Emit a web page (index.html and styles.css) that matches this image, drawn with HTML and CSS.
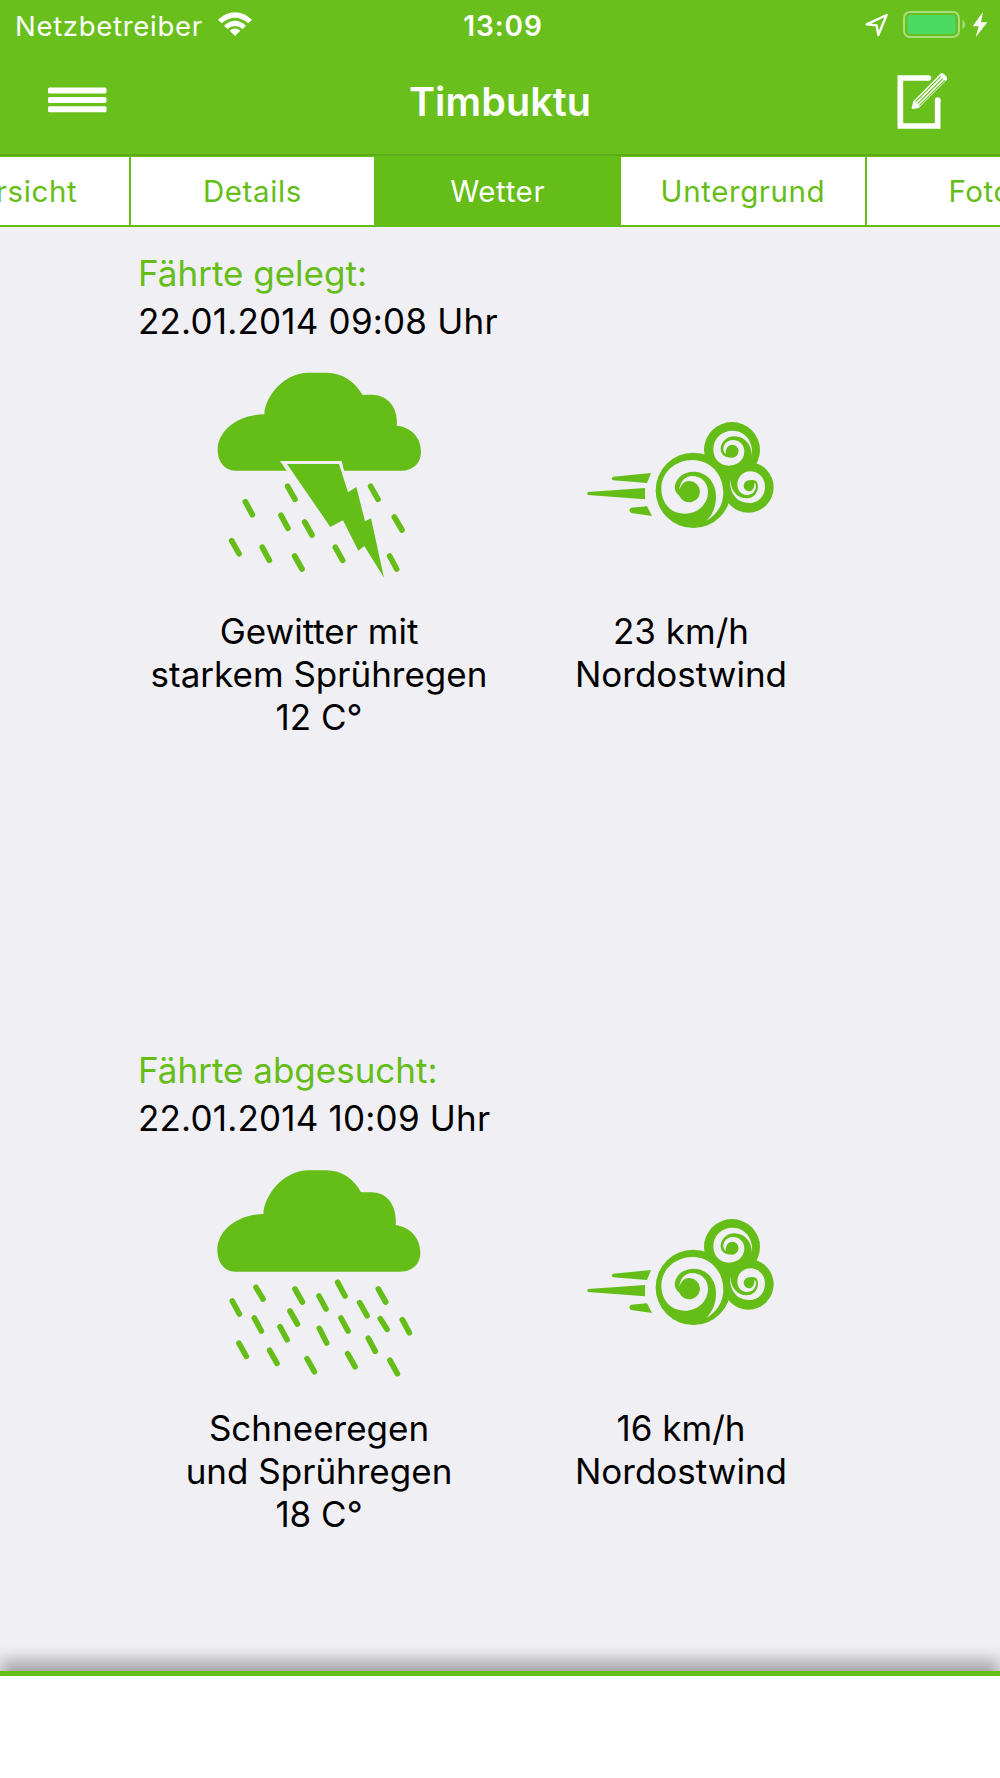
FILE: index.html
```html
<!DOCTYPE html>
<html lang="de">
<head>
    <meta charset="UTF-8">
    <meta name="viewport" content="width=device-width, initial-scale=1.0">
    <title>Timbuktu</title>
    <link rel="stylesheet" href="styles.css">
</head>
<body>
    <header>
        <div class="statusbar">
            <div class="carrier">
                <span>Netzbetreiber</span>
                <svg class="wifi" width="36" height="26" viewBox="0 0 108 78">
                    <path d="M54 75L38 59Q54 46 70 59Z"/>
                    <path d="M21 44Q54 15 87 44L77 54Q54 36 31 54Z"/>
                    <path d="M3 26Q54 -18 105 26L94 37Q54 4 14 37Z"/>
                </svg>
            </div>
            <div class="time">13:09</div>
            <div class="indicators">
                <svg width="24" height="24" viewBox="0 0 72 72">
                    <path d="M5 34L65 6L40 66L35 37Z" fill="none" stroke="#fff" stroke-width="7" stroke-linejoin="round"/>
                </svg>
                <svg class="battery" width="64" height="28" viewBox="0 0 64 28">
                    <rect x="1" y="1" width="55" height="25" rx="6" fill="none" stroke="#fff" stroke-opacity=".45" stroke-width="2"/>
                    <rect x="4.500" y="4" width="48" height="19" rx="3" fill="#4cd964"/>
                    <path d="M59.500 8.500Q65 13.500 59.500 18.500Z" fill="#fff" fill-opacity=".45"/>
                </svg>
                <svg width="16" height="26" viewBox="0 0 48 78">
                    <path d="M33 0L2 43H20L11 76L46 31H27Z" fill="#fff"/>
                </svg>
            </div>
        </div>
        <div class="navbar">
            <svg class="menu" width="60" height="27" viewBox="0 0 60 27">
                <rect x="0" y="0.500" width="58.500" height="6" rx="1.500"/>
                <rect x="0" y="10" width="58.500" height="6" rx="1.500"/>
                <rect x="0" y="19.300" width="58.500" height="6" rx="1.500"/>
            </svg>
            <h1>Timbuktu</h1>
            <svg class="edit" width="52" height="58" viewBox="0 0 156 174">
                <path d="M95 18H10V162H122V84" fill="none" stroke="#fff" stroke-width="17"/>
                <circle cx="94" cy="18" r="8.500" fill="#fff"/>
                <circle cx="122" cy="84" r="8.500" fill="#fff"/>
                <path d="M49 88L130 5Q134 1 140 5L149 14Q153 20 148 25L65 108L47 111Q43 111 44 106Z" fill="#fff"/>
                <path d="M56 89L131 13M62 95L137 20M67 101L143 25" fill="none" stroke="#69c01c" stroke-width="3.500"/>
            </svg>
        </div>
    </header>

    <nav class="tabs">
        <div class="tab">Übersicht</div>
        <div class="tab">Details</div>
        <div class="tab active">Wetter</div>
        <div class="tab">Untergrund</div>
        <div class="tab">Fotos</div>
    </nav>

    <main>
        <section class="weather">
            <h2>Fährte gelegt:</h2>
            <p class="date">22.01.2014 09:08 Uhr</p>
            <div class="conditions">
                <div class="condition">
                    <svg width="240" height="230" viewBox="-3 0 720 690">
                        <path class="fill" d="M105 332C75 332 53 306 53 270C53 210 115 163 193 163C196 105 255 38 325 38H380C427 38 466 66 487 104H515C562 104 596 142 590 197C630 200 663 230 663 275C663 310 638 332 603 332Z"/>
                        <path class="cut" d="M240 303H425L445 385L469 374L520 470L560 665L380 510Z"/>
                        <path class="fill" d="M261 312H417L444 397L469 381L495 484L513 475L552 653L493 558L475 572L429 481L391 501Z"/>
                        <path class="drops" d="M263 379L285 418M136 425L157 464M243 466L264 505M314 486L336 525M95 542L117 581M187 562L208 601M284 588L306 627M406 562L428 601M512 379L534 418M583 471L606 510M569 588L590 627"/>
                    </svg>
                    <p>Gewitter mit<br>starkem Sprühregen<br>12 C°</p>
                </div>
                <div class="condition">
                    <svg class="wind" width="220" height="150" viewBox="3 0 660 450">
                        <path class="fill" d="M130 230L243 219L231 249L130 241Q120 236 130 230ZM54 276L225 264V298L54 285Q50 280 54 276ZM183 323L231 319L246 348L184 339Q173 332 183 323Z"/>
                        <g class="fill">
                            <circle cx="370" cy="271" r="113"/>
                            <circle cx="486" cy="150" r="84"/>
                            <circle cx="535" cy="262" r="76"/>
                        </g>
                        <g class="cut">
                            <path d="M408 363C440 345 460 315 460 278C460 222 420 180 368 180C315 180 274 218 274 265C274 310 302 341 344 341C384 341 414 312 414 275C414 248 394 228 366 228C346 228 329 244 328 270C333 253 343 243 358 243A32 32 0 1 1 328 287C318 280 314 270 314 262C316 235 340 215 370 215C410 215 438 247 438 288C438 320 428 345 408 363Z"/>
                            <path d="M546 168C551 125 525 92 488 92C455 92 430 116 430 148C430 177 450 197 477 197C503 197 523 180 523 154C523 134 508 120 488 120C472 120 459 133 460 150Q461 158 467 163C466 145 475 134 487 134A19 19 0 1 1 485 173C463 173 452 162 452 148C452 127 470 109 493 109C525 109 545 135 546 168Z"/>
                            <path d="M480 238C478 280 500 309 538 309C565 309 585 288 585 260C585 234 566 214 541 214C518 214 502 232 502 254C502 273 516 285 532 285C546 285 558 273 558 258Q558 252 553 248C554 266 546 274 535 274A16 16 0 1 1 541 241C556 236 564 246 564 258C564 280 550 295 530 295C502 295 484 275 480 238Z"/>
                        </g>
                    </svg>
                    <p>23 km/h<br>Nordostwind</p>
                </div>
            </div>
        </section>

        <section class="weather">
            <h2>Fährte abgesucht:</h2>
            <p class="date">22.01.2014 10:09 Uhr</p>
            <div class="conditions">
                <div class="condition">
                    <svg width="240" height="230" viewBox="-3 6 720 690">
                        <path class="fill" d="M105 350C75 350 52 325 52 285C52 225 115 178 190 177C194 115 255 46 325 46H380C425 46 462 72 483 112H515C560 112 592 150 587 211C628 215 661 248 661 293C661 328 635 350 600 350Z"/>
                        <path class="drops" d="M168 397L189 432M97 438L118 477M285 402L307 441M357 423L378 462M413 382L435 423M535 402L557 441M479 443L501 482M163 489L184 528M270 468L292 507M240 515L261 554M358 520L380 564M423 489L444 528M541 491L561 523M607 494L628 533M117 565L139 604M209 586L231 625M321 611L343 650M443 596L465 635M505 550L526 589M570 616L592 656"/>
                    </svg>
                    <p>Schneeregen<br>und Sprühregen<br>18 C°</p>
                </div>
                <div class="condition">
                    <svg class="wind" width="220" height="150" viewBox="3 0 660 450">
                        <path class="fill" d="M130 230L243 219L231 249L130 241Q120 236 130 230ZM54 276L225 264V298L54 285Q50 280 54 276ZM183 323L231 319L246 348L184 339Q173 332 183 323Z"/>
                        <g class="fill">
                            <circle cx="370" cy="271" r="113"/>
                            <circle cx="486" cy="150" r="84"/>
                            <circle cx="535" cy="262" r="76"/>
                        </g>
                        <g class="cut">
                            <path d="M408 363C440 345 460 315 460 278C460 222 420 180 368 180C315 180 274 218 274 265C274 310 302 341 344 341C384 341 414 312 414 275C414 248 394 228 366 228C346 228 329 244 328 270C333 253 343 243 358 243A32 32 0 1 1 328 287C318 280 314 270 314 262C316 235 340 215 370 215C410 215 438 247 438 288C438 320 428 345 408 363Z"/>
                            <path d="M546 168C551 125 525 92 488 92C455 92 430 116 430 148C430 177 450 197 477 197C503 197 523 180 523 154C523 134 508 120 488 120C472 120 459 133 460 150Q461 158 467 163C466 145 475 134 487 134A19 19 0 1 1 485 173C463 173 452 162 452 148C452 127 470 109 493 109C525 109 545 135 546 168Z"/>
                            <path d="M480 238C478 280 500 309 538 309C565 309 585 288 585 260C585 234 566 214 541 214C518 214 502 232 502 254C502 273 516 285 532 285C546 285 558 273 558 258Q558 252 553 248C554 266 546 274 535 274A16 16 0 1 1 541 241C556 236 564 246 564 258C564 280 550 295 530 295C502 295 484 275 480 238Z"/>
                        </g>
                    </svg>
                    <p>16 km/h<br>Nordostwind</p>
                </div>
            </div>
        </section>
    </main>

    <footer></footer>
</body>
</html>
```

FILE: styles.css
```css
* {
    box-sizing: border-box;
}
html {
    overflow: hidden;
}
body {
    display: flex;
    flex-direction: column;
    height: 1778px;
    margin: 0;
    overflow: hidden;
    background-color: #efeff4;
    font-family: Inter, "Liberation Sans", sans-serif;
    color: #000;
}
h1, h2, p {
    margin: 0;
    font-weight: 400;
}
svg {
    display: block;
    flex: none;
}
header {
    height: 156px;
    background-color: #69c01c;
    border-bottom: 2px solid #5cac15;
    color: #fff;
}
.statusbar {
    display: grid;
    grid-template-columns: 1fr auto 1fr;
    align-items: center;
    height: 51px;
    padding: 0 12px 0 15px;
    font-size: 27.5px;
}
.carrier {
    display: flex;
    align-items: center;
    gap: 14px;
    letter-spacing: 0.7px;
}
.wifi {
    fill: #fff;
    margin-top: -3px;
}
.time {
    padding-left: 3px;
    font-size: 28px;
    font-weight: 600;
    letter-spacing: 0.9px;
}
.indicators {
    display: flex;
    justify-content: flex-end;
    align-items: center;
    margin-top: -1px;
}
.battery {
    margin: 0 5px 0 14px;
}
.navbar {
    display: grid;
    grid-template-columns: 1fr auto 1fr;
    align-items: center;
    height: 101px;
    padding: 0 51px 0 48px;
}
.menu {
    fill: #fff;
    margin-top: -2px;
}
.navbar h1 {
    padding-left: 3px;
    font-size: 39.5px;
    font-weight: 600;
    letter-spacing: 0.1px;
}
.edit {
    justify-self: end;
    margin-top: -2px;
}
.tabs {
    display: flex;
    flex: none;
    height: 71px;
    margin-left: -116.6px;
    border-top: 1px solid #65bd18;
    border-bottom: 2px solid #65bd18;
    background-color: #fff;
}
.tab {
    flex: none;
    width: 245.3px;
    border-left: 2px solid #65bd18;
    font-size: 29.5px;
    line-height: 69px;
    letter-spacing: 0.6px;
    text-align: center;
    color: #65bd18;
}
.tab.active {
    background-color: #65bd18;
    color: #fff;
}
main {
    height: 1444px;
    padding: 22px 138px 0;
}
.weather {
    height: 797px;
    font-size: 35px;
}
.weather h2 {
    font-size: 35px;
    line-height: 48px;
    color: #65bd18;
}
.date {
    line-height: 48px;
    letter-spacing: 0.2px;
}
.conditions {
    display: grid;
    grid-template-columns: 1fr 1fr;
    margin-top: 15px;
}
.condition {
    display: flex;
    flex-direction: column;
    align-items: center;
    text-align: center;
}
.condition p {
    margin-top: 20px;
    line-height: 43px;
    white-space: nowrap;
}
.wind {
    margin: 40px 0;
}
.fill {
    fill: #65bd18;
}
.cut {
    fill: #efeff4;
}
.drops {
    fill: none;
    stroke: #65bd18;
    stroke-width: 17;
    stroke-linecap: round;
}
footer {
    flex: 1;
    border-top: 5px solid #65bd18;
    background-color: #fff;
    box-shadow: 0 -10px 16px rgba(0,0,0,0.32);
}
```
